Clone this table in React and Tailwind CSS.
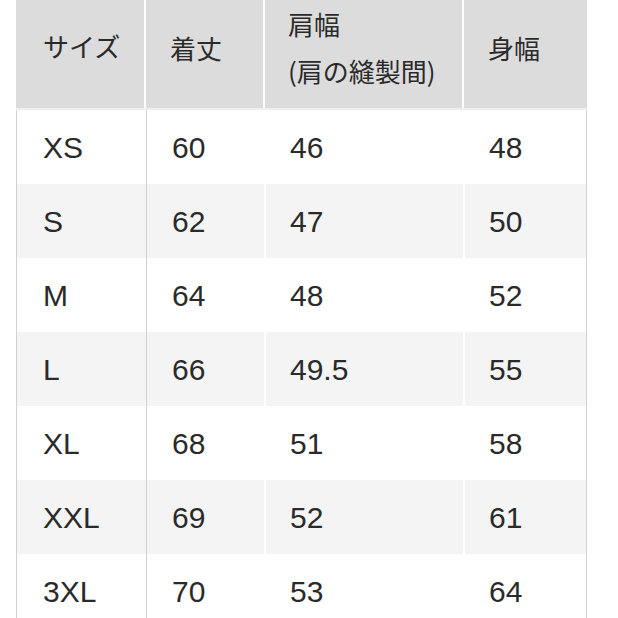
import React from "react";

const rows = [
  ["XS", "60", "46", "48"],
  ["S", "62", "47", "50"],
  ["M", "64", "48", "52"],
  ["L", "66", "49.5", "55"],
  ["XL", "68", "51", "58"],
  ["XXL", "69", "52", "61"],
  ["3XL", "70", "53", "64"],
];

const cols = "grid grid-cols-[130px_119px_199px_123px]";

const App = () => {
  return (
    <div className="w-[618px] h-[618px] overflow-hidden bg-white pl-[16px] text-[#2a2a2a]">
      <div className="w-[571px]">
        {/* header */}
        <div
          className={`${cols} h-[110px] border-b-2 border-[#efefef] bg-white text-[26px] leading-[47px]`}
          style={{ fontFamily: '"Noto Sans CJK JP", "Noto Sans", sans-serif' }}
        >
          <div className="flex items-center pb-[18px] pl-[27px] mr-[2px] bg-[#dcdcdc]">サイズ</div>
          <div className="flex items-center pb-[14px] pl-[24px] mr-[2px] bg-[#dcdcdc]">着丈</div>
          <div className="flex flex-col justify-center pb-[14px] pl-[23px] mr-[2px] bg-[#dcdcdc]">
            <span>肩幅</span>
            <span>(肩の縫製間)</span>
          </div>
          <div className="flex items-center pb-[14px] pl-[24px] bg-[#dcdcdc]">身幅</div>
        </div>

        {/* body */}
        <div className="text-[30px]" style={{ fontFamily: '"Liberation Sans", Arial, sans-serif' }}>
          {rows.map((r, i) => (
            <div
              key={r[0]}
              className={`${cols} h-[74px] border-x border-[#d2d2d2] ${i % 2 === 1 ? "bg-[#f4f4f4]" : "bg-white"}`}
            >
              <div className="flex items-center pl-[26px] border-r border-[#d2d2d2]">{r[0]}</div>
              <div className="flex items-center pl-[25px] border-r-2 border-white">{r[1]}</div>
              <div className="flex items-center pl-[24px] border-r-2 border-white">{r[2]}</div>
              <div className="flex items-center pl-[24px]">{r[3]}</div>
            </div>
          ))}
        </div>
      </div>
    </div>
  );
};

export default App;
